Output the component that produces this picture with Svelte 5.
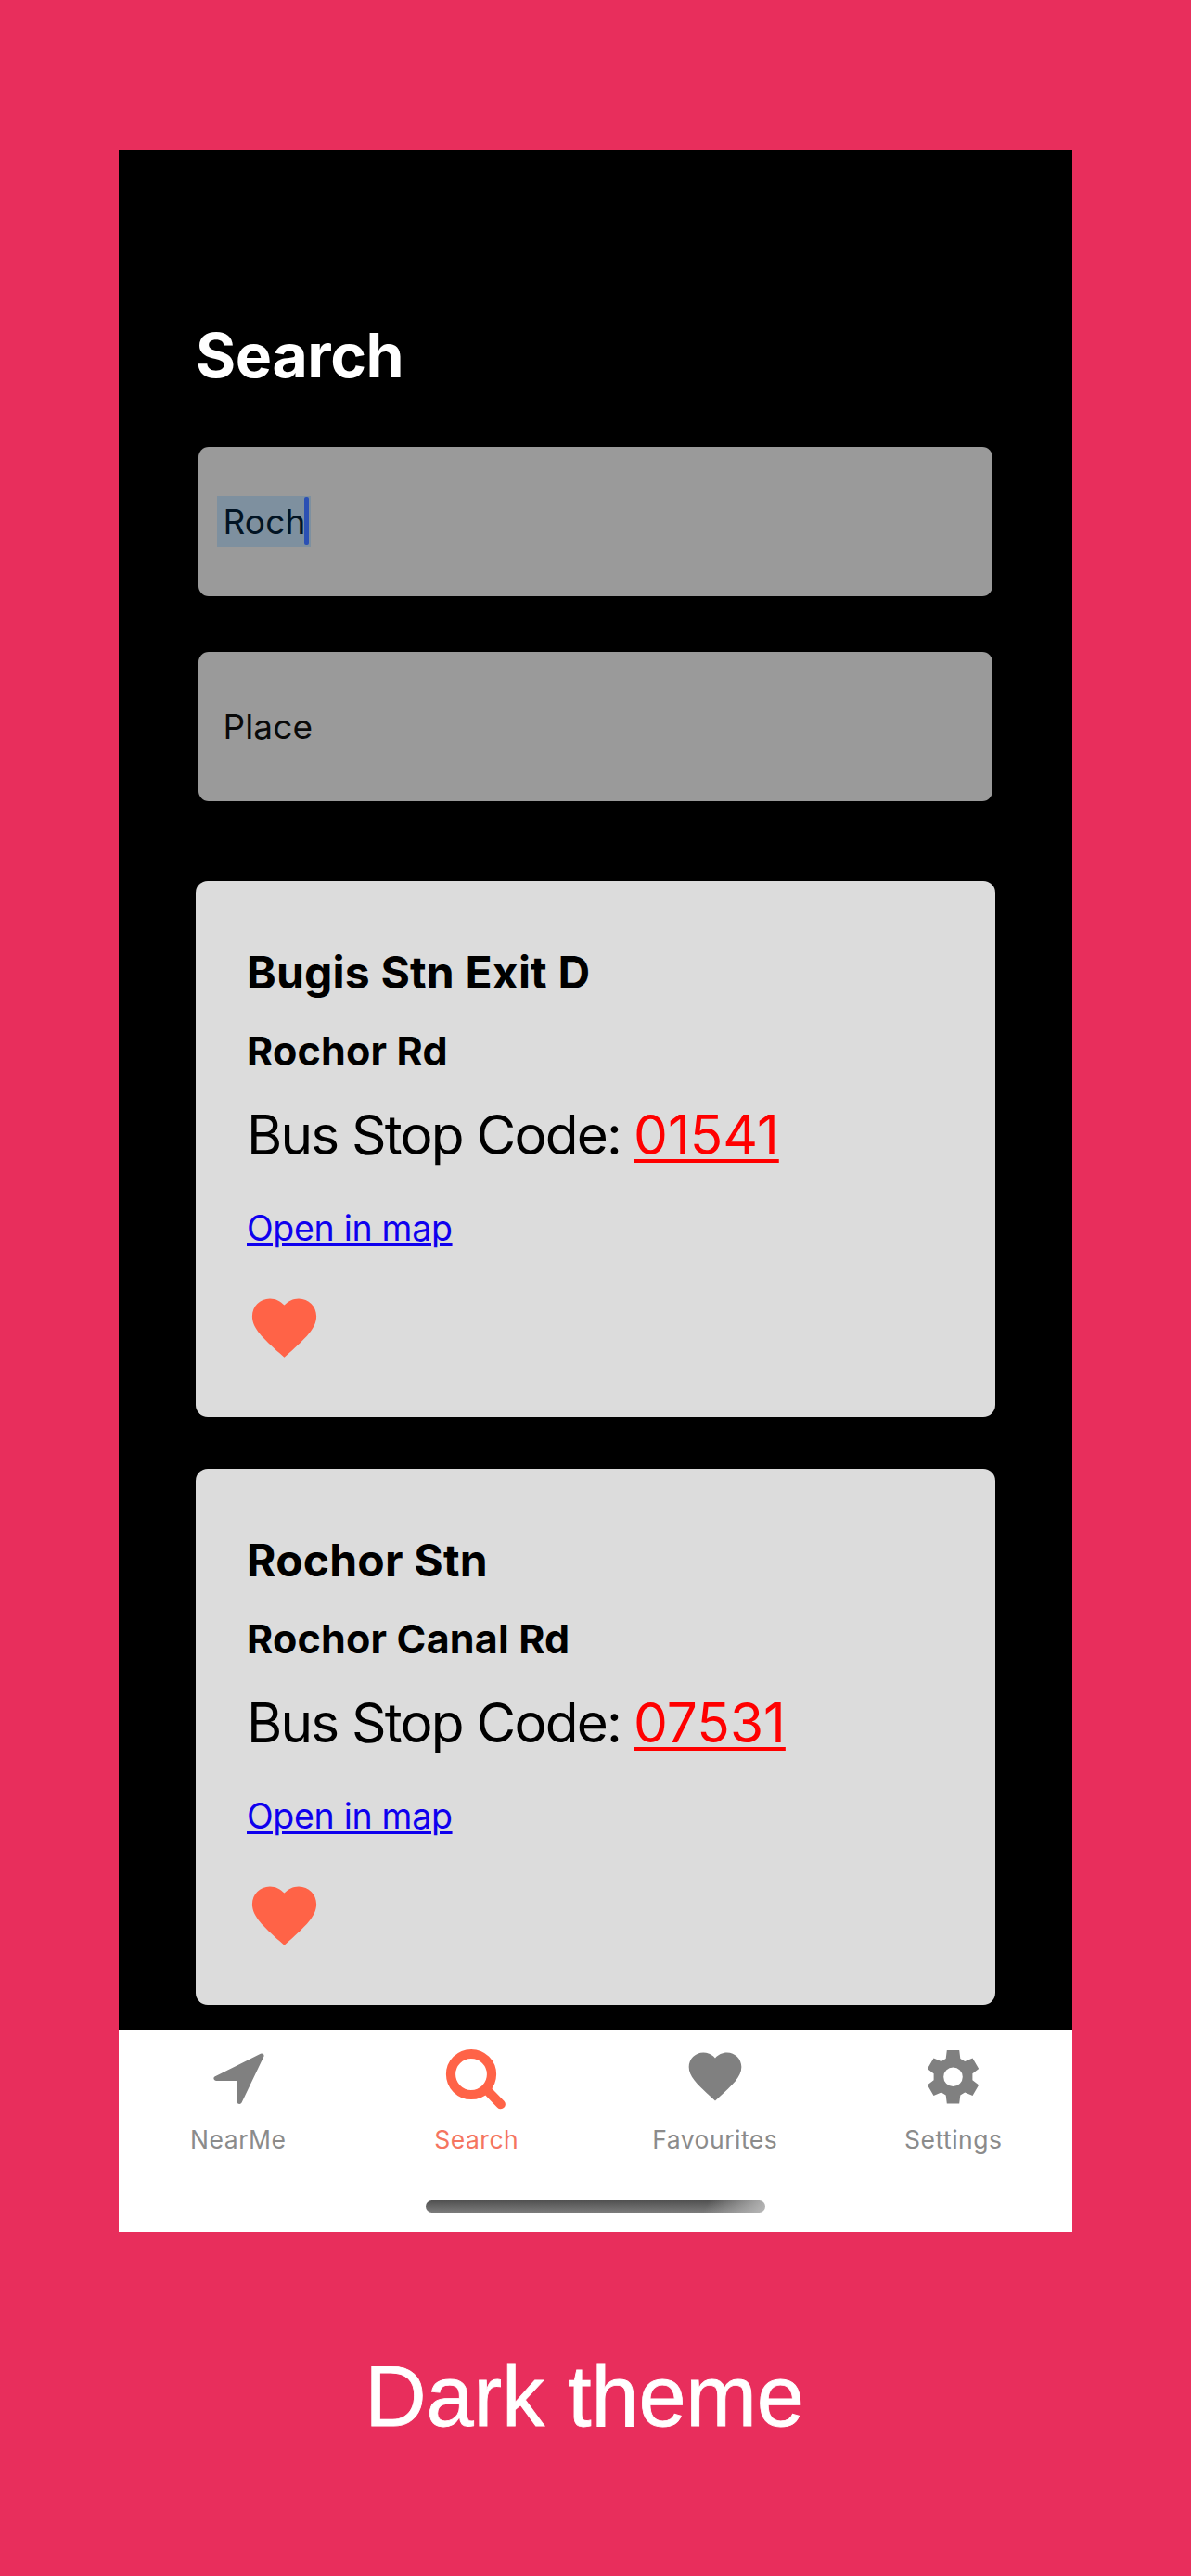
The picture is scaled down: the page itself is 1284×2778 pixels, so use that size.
<script>
  const stops = [
    { name: 'Bugis Stn Exit D', road: 'Rochor Rd', code: '01541' },
    { name: 'Rochor Stn', road: 'Rochor Canal Rd', code: '07531' }
  ];
  const tabs = ['NearMe', 'Search', 'Favourites', 'Settings'];
  const active = 'Search';
</script>

{#snippet heart()}
  <svg class="icon heart" viewBox="0 0 24 24">
    <path d="M12 21.35l-1.45-1.32C5.4 15.36 2 12.28 2 8.5 2 5.42 4.42 3 7.5 3c1.74 0 3.41.81 4.5 2.09C13.09 3.81 14.76 3 16.5 3 19.58 3 22 5.42 22 8.5c0 3.78-3.4 6.86-8.55 11.54L12 21.35z" />
  </svg>
{/snippet}

<div class="page">
  <div class="phone">
    <main>
      <h1>Search</h1>
      <div class="fields">
        <div class="field"><span class="selected">Roch<i class="caret"></i></span></div>
        <div class="field"><span class="placeholder">Place</span></div>
      </div>
      <div class="cards">
        {#each stops as stop}
          <article class="card">
            <h2>{stop.name}</h2>
            <h3>{stop.road}</h3>
            <p class="code"><span>Bus Stop Code:</span><a href="#stop">{stop.code}</a></p>
            <a class="map" href="#map">Open in map</a>
            {@render heart()}
          </article>
        {/each}
      </div>
    </main>
    <nav>
      <div class="tabs">
        {#each tabs as tab}
          <div class="tab" class:active={tab === active}>
            {#if tab === 'NearMe'}
              <svg class="icon" viewBox="0 0 68 68">
                <path class="arrow" d="M59 12L10 36.5H35.3V61.5Z" />
              </svg>
            {:else if tab === 'Search'}
              <svg class="icon" viewBox="0 0 68 68">
                <g class="lens"><circle cx="28" cy="32" r="22" /><path d="M44 48L59.8 64.2" /></g>
              </svg>
            {:else if tab === 'Favourites'}
              {@render heart()}
            {:else}
              <svg class="icon" viewBox="0 0 68 68">
                <path
                  fill-rule="evenodd"
                  d="M26.8 6H40.2L41.3 15L46.2 17.9L54.5 14.5L61.2 26L54.4 31.2V38.2L61.2 43.4L54.5 55L46.2 51.6L41.3 54.4L40.2 63.4H26.8L25.7 54.4L20.8 51.6L12.5 55L5.8 43.4L12.6 38.2V31.2L5.8 26L12.5 14.5L20.8 17.9L25.7 15ZM33.5 24.4A10.3 10.3 0 1 0 33.5 45A10.3 10.3 0 1 0 33.5 24.4Z"
                />
              </svg>
            {/if}
            <span>{tab}</span>
          </div>
        {/each}
      </div>
      <div class="home"></div>
    </nav>
  </div>
  <div class="caption">Dark theme</div>
</div>

<style>
  :global(body) { background: #e82e5c; }
  .page {
    box-sizing: border-box;
    width: 1284px;
    height: 2778px;
    padding: 162px 128px 0;
    background: #e82e5c;
    font-family: Inter, 'Liberation Sans', sans-serif;
    overflow: hidden;
  }
  .phone {
    display: flex;
    flex-direction: column;
    width: 1028px;
    height: 2245px;
    background: #000;
  }
  main { flex: 1; padding: 181px 83px 0; }
  h1, h2, h3, p { margin: 0; font-weight: 700; }
  h1 { color: #fff; font-size: 66px; line-height: 80px; letter-spacing: -0.4px; }
  .fields { display: flex; flex-direction: column; gap: 60px; padding: 59px 3px 0; }
  .field {
    display: flex;
    align-items: center;
    box-sizing: border-box;
    height: 161px;
    padding-left: 20px;
    border-radius: 11px;
    background: #9a9a9a;
    font-size: 37px;
    letter-spacing: 0.1px;
    color: #0a0a0a;
  }
  .selected {
    position: relative;
    box-sizing: border-box;
    width: 101px;
    height: 55px;
    padding-left: 6.5px;
    line-height: 55px;
    background: #7e909f;
    color: #021424;
  }
  .caret {
    position: absolute;
    left: 93.5px;
    top: 1px;
    width: 5.2px;
    height: 52px;
    border-radius: 2px;
    background: #2b50b4;
  }
  .placeholder { padding-left: 6.5px; }
  .cards { display: flex; flex-direction: column; gap: 56px; margin-top: 86px; }
  .card {
    display: flex;
    flex-direction: column;
    align-items: flex-start;
    box-sizing: border-box;
    height: 578px;
    padding: 69px 55px 0;
    border-radius: 13px;
    background: #dcdcdc;
    color: #000;
  }
  h2 { font-size: 48px; line-height: 60px; letter-spacing: 0.2px; }
  h3 { margin-top: 27px; font-size: 43px; line-height: 54px; letter-spacing: 0.2px; }
  .code {
    display: flex;
    gap: 14px;
    margin-top: 29px;
    font-size: 58.5px;
    font-weight: 400;
    line-height: 70px;
    letter-spacing: -1.8px;
  }
  .code a {
    color: #f00;
    letter-spacing: 0;
    text-decoration-thickness: 3.7px;
    text-underline-offset: 5px;
  }
  .map {
    margin-top: 43px;
    color: #0f00ee;
    font-size: 37.5px;
    line-height: 46px;
    letter-spacing: -0.3px;
    text-decoration-thickness: 3px;
    text-underline-offset: 2.5px;
  }
  .icon { display: block; width: 68px; height: 68px; overflow: visible; fill: currentColor; }
  .card .icon { width: 83px; height: 83px; margin-top: 42px; margin-left: -1px; color: #ff6347; }
  nav { height: 218px; background: #fff; }
  .tabs { display: grid; grid-template-columns: repeat(4, 1fr); padding-top: 16px; }
  .tab {
    display: flex;
    flex-direction: column;
    align-items: center;
    gap: 18px;
    color: #808080;
    font-size: 26.5px;
    line-height: 32px;
    letter-spacing: 0.5px;
  }
  .tab span { padding-left: 0.5px; color: #8b8b8b; }
  .tab.active { color: #ff6347; }
  .tab.active span { color: #f57560; }
  .arrow { stroke: currentColor; stroke-width: 5; stroke-linejoin: round; }
  .lens { fill: none; stroke: currentColor; stroke-width: 10.2; stroke-linecap: round; }
  .home {
    width: 366px;
    height: 13px;
    margin: 50px auto 0;
    border-radius: 7px;
    background:
      linear-gradient(115deg, transparent 82%, #b8b8b8 100%),
      linear-gradient(#505050, #7c7c7c);
  }
  .caption {
    width: 1004px;
    margin-top: 127px;
    color: #fff;
    font-family: 'Liberation Sans', Arial, sans-serif;
    font-size: 92px;
    line-height: 100px;
    letter-spacing: -0.2px;
    text-align: center;
    -webkit-text-stroke: 0.8px #fff;
  }
</style>
